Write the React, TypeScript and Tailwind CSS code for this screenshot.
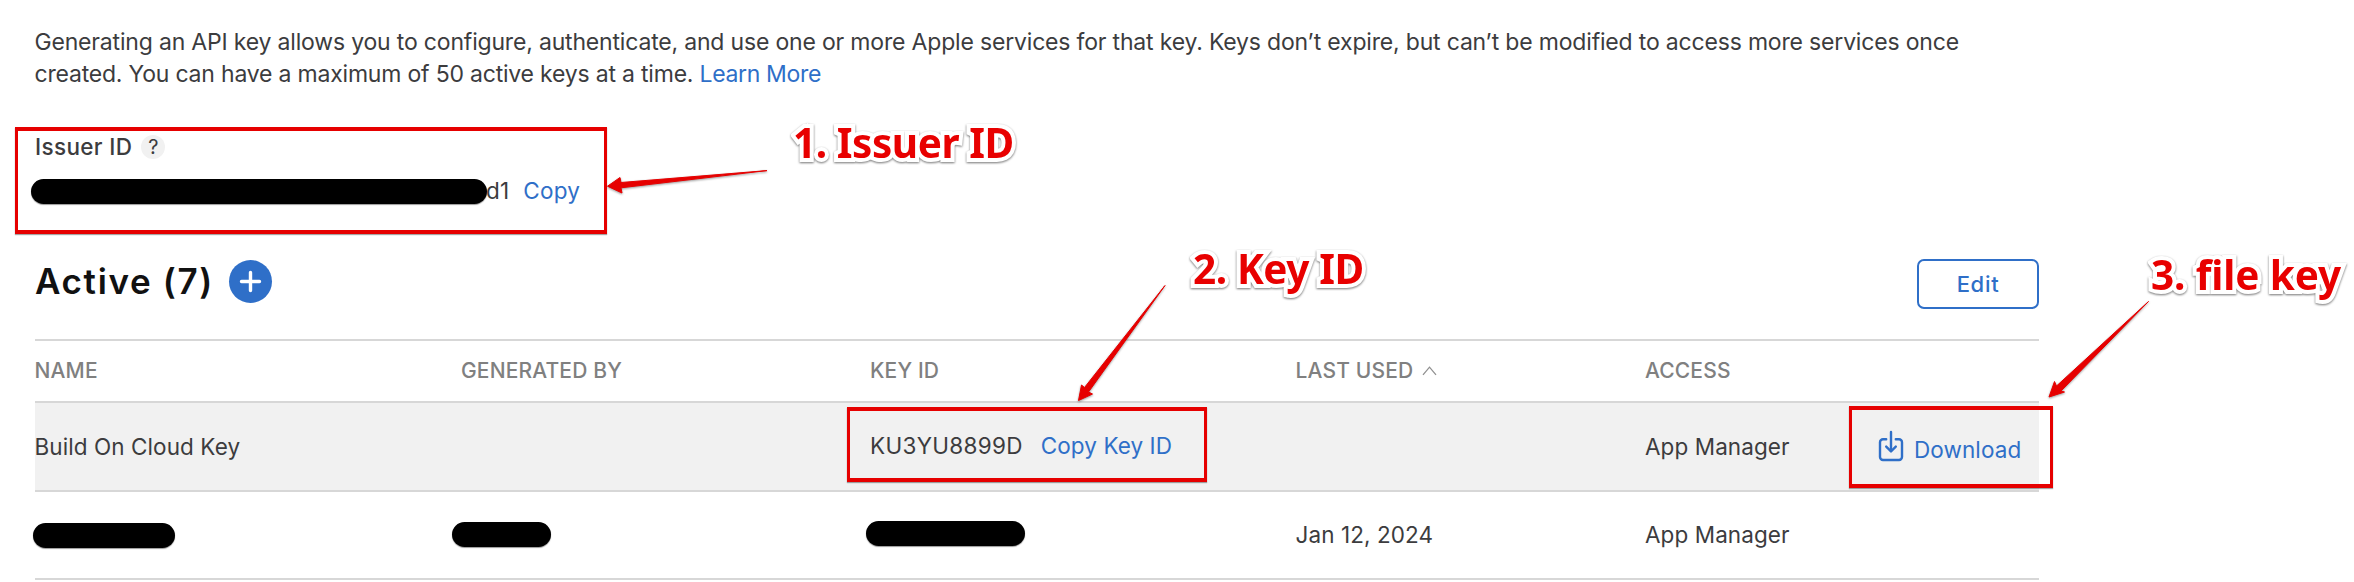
import type { ReactNode } from "react";

const COLUMNS =
  "grid grid-cols-[426px_410px_425px_349px_232px_162px] items-center";

function Redaction({ className }: { className: string }) {
  return (
    <span
      className={`block rounded-full bg-black shadow-[0_1px_1px_rgba(0,0,0,0.4)] ${className}`}
    />
  );
}

function TextLink({ children }: { children: ReactNode }) {
  return (
    <a href="#" className="text-[#2f6fc8]">
      {children}
    </a>
  );
}

function DownloadIcon() {
  return (
    <svg
      width="26"
      height="32"
      viewBox="0 0 26 32"
      fill="none"
      stroke="#2f6fc8"
      strokeWidth="2.4"
      strokeLinecap="round"
      strokeLinejoin="round"
      className="-mt-[2px] ml-[1px]"
    >
      <path d="M8.2 9.2H5A3 3 0 0 0 2 12.200V27a3 3 0 0 0 3 3H21a3 3 0 0 0 3-3V12.200a3 3 0 0 0-3-3H17.800" />
      <path d="M13 2V21" />
      <path d="M8.200 16.600L13 21.300L17.800 16.600" />
    </svg>
  );
}

function Highlight({ className }: { className: string }) {
  return (
    <div
      className={`pointer-events-none absolute border-[#e60000] shadow-[0_1px_1px_rgba(0,0,0,0.35)] ${className}`}
    />
  );
}

function Label({ className, children }: { className: string; children: string }) {
  return (
    <div
      className={`absolute whitespace-nowrap font-['Noto_Sans',sans-serif] text-[40.5px] font-bold leading-[54px] text-[#e80000] [-webkit-text-stroke:8px_#fff] [paint-order:stroke_fill] [stroke-linejoin:round] [filter:drop-shadow(0_1px_1px_rgba(0,0,0,0.55))] ${className}`}
    >
      {children}
    </div>
  );
}

export default function App() {
  return (
    <div className="relative h-[582px] w-[2354px] overflow-hidden bg-white font-['Inter','Liberation_Sans',sans-serif] text-[#3c3c3e]">
      <main className="ml-[35px] w-[2004px] pt-[26px]">
        <p className="-ml-[0.5px] h-[64px] whitespace-nowrap text-[23px] leading-[32px] tracking-[-0.18px]">
          Generating an API key allows you to configure, authenticate, and use one or more Apple services for that key. Keys don’t expire, but can’t be modified to access more services once
          <br />
          <span className="tracking-[-0.2px]">
            created. You can have a maximum of 50 active keys at a time.{" "}
          </span>
          <span className="tracking-[-0.35px]">
            <TextLink>Learn More</TextLink>
          </span>
        </p>

        <section className="mt-[41px]">
          <div className="flex h-[32px] items-center gap-[9px]">
            <h2 className="text-[22.5px] font-medium leading-[32px] tracking-[0.35px]">Issuer ID</h2>
            <span className="flex size-[24px] items-center justify-center rounded-full bg-[#f1f1f1] text-[20px]">
              ?
            </span>
          </div>
          <div className="mt-[12px] flex h-[32px] items-center text-[22.5px] leading-[32px] tracking-[0.2px]">
            <Redaction className="-ml-[4px] h-[25px] w-[456px]" />
            <span className="-ml-[1px] mr-[14px]">d1</span>
            <TextLink>Copy</TextLink>
          </div>
        </section>

        <div className="mt-[51px] flex h-[50px] items-center">
          <h1 className="-mt-[5px] text-[35px] font-semibold leading-[44px] tracking-[1.65px] text-[#111]">
            Active (7)
          </h1>
          <button className="-mt-[4px] ml-[15px] flex size-[43px] items-center justify-center rounded-full bg-[#2f6fc8]">
            <svg width="23" height="23" viewBox="0 0 23 23" stroke="#fff" strokeWidth="3.4" strokeLinecap="round">
              <path d="M11.500 2.500V20.500M2.500 11.500H20.500" />
            </svg>
          </button>
          <button className="ml-auto mt-[2px] flex h-[50px] w-[122px] items-center justify-center rounded-[7px] border-2 border-[#2f6fc8] text-[22px] font-medium tracking-[0.7px] text-[#2f6fc8]">
            Edit
          </button>
        </div>

        <div className="mt-[31px] border-y-2 border-[#d7d7d7]">
          <div className={`${COLUMNS} h-[60px] text-[21px] font-medium tracking-[0.15px] text-[#808080]`}>
            <span className="-ml-[0.5px]">NAME</span>
            <span>GENERATED BY</span>
            <span className="-ml-[1px]">KEY ID</span>
            <span className="-ml-[0.5px] flex items-center gap-[9px]">
              LAST USED
              <svg width="15" height="10" viewBox="0 0 15 10" fill="none" stroke="#909090" strokeWidth="1.300">
                <path d="M1 8.800L7.500 1.200L14 8.800" />
              </svg>
            </span>
            <span>ACCESS</span>
          </div>

          <div className={`${COLUMNS} h-[91px] border-y-2 border-[#d7d7d7] bg-[#f1f1f1] text-[22.5px] tracking-[0.08px]`}>
            <span className="-ml-[0.5px]">Build On Cloud Key</span>
            <span />
            <span className="-ml-[1px] flex gap-[18px] pb-[1px]">
              <span className="tracking-[0.3px]">KU3YU8899D</span>
              <TextLink>Copy Key ID</TextLink>
            </span>
            <span />
            <span>App Manager</span>
            <span className="flex items-center gap-[10px] text-[#2f6fc8]">
              <DownloadIcon />
              <span className="pt-[6px]">Download</span>
            </span>
          </div>

          <div className={`${COLUMNS} h-[86px] text-[22.5px] tracking-[0.08px]`}>
            <Redaction className="-ml-[2px] h-[25px] w-[142px]" />
            <Redaction className="-ml-[9px] mb-[2px] h-[25px] w-[99px]" />
            <Redaction className="-ml-[5px] mb-[4px] h-[25px] w-[159px]" />
            <span className="-ml-[0.5px]">Jan 12, 2024</span>
            <span>App Manager</span>
          </div>
        </div>
      </main>

      <Highlight className="left-[15px] top-[127px] h-[107px] w-[592px] border-x-[3px] border-y-[4px]" />
      <Highlight className="left-[847px] top-[407px] h-[75px] w-[360px] border-x-[3px] border-y-[4px]" />
      <Highlight className="left-[1849px] top-[406px] h-[82px] w-[204px] border-x-[3px] border-y-[4px]" />

      <svg
        className="pointer-events-none absolute inset-0 [filter:drop-shadow(0_1px_1px_rgba(0,0,0,0.4))]"
        width="2354"
        height="582"
        fill="#e60000"
        stroke="#e60000"
        strokeLinejoin="round"
      >
        <path d="M607.500 186.200L620 177.500L621 182.500L767 170.600L621 187.800L622 193Z" />
        <path d="M1078.500 400.500L1081.500 385L1084.500 387.500L1165 285.500L1088.500 392L1092.500 394Z" />
        <path d="M2049 397L2054.500 381.500L2056.500 386L2148.500 301.500L2061 391L2064.500 392Z" />
      </svg>

      <Label className="left-[793px] top-[116px] tracking-[-0.45px]">1. Issuer ID</Label>
      <Label className="left-[1193px] top-[242px] tracking-[-0.4px]">2. Key ID</Label>
      <Label className="left-[2151px] top-[248px] tracking-[-0.1px]">3. file key</Label>
    </div>
  );
}
